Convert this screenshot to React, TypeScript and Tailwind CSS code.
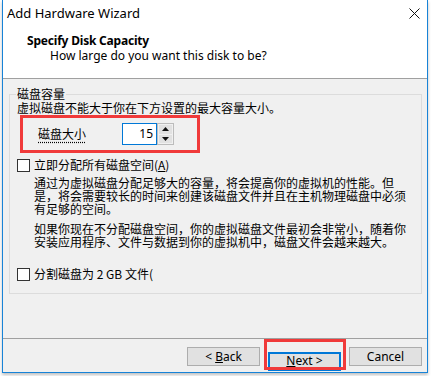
const CheckBox = () => (
    <span className="w-[13px] h-[13px] border border-[#333333] bg-white shrink-0" />
);

const WizardButton = ({ children, primary }: { children: React.ReactNode; primary?: boolean }) => (
    <button
        className={
            primary
                ? "w-[73px] h-[19px] bg-[#e1e1e1] border-2 border-[#0078d7] text-[12px] leading-none text-black"
                : "w-[73px] h-[19px] bg-[#e1e1e1] border border-[#adadad] text-[12px] leading-none text-black"
        }
    >
        {children}
    </button>
);

const App = () => {
    return (
        <div className="w-[432px] h-[376px] bg-white overflow-hidden font-['Noto_Sans','Noto_Sans_CJK_SC',sans-serif] text-black">
            <div className="ml-[2px] w-[426px] h-[373px] border-x border-b border-[#1883d7] bg-[#f0f0f0] flex flex-col shadow-[0_2px_3px_rgba(0,0,0,0.25)]">
                {/* title bar + header */}
                <div className="bg-white h-[79px] border-b border-[#a0a0a0] shrink-0">
                    <div className="h-[27px] flex items-center justify-between pl-[4px] pr-[7px]">
                        <span className="text-[13px]">Add Hardware Wizard</span>
                        <svg width="11" height="11" viewBox="0 0 11 11">
                            <path d="M0.5 0.5 L10.5 10.5 M10.5 0.5 L0.5 10.5" stroke="#111" strokeWidth="1" />
                        </svg>
                    </div>
                    <div className="pl-[24px] pt-[6px] text-[12px] font-bold leading-[16px] tracking-[-0.2px]">Specify Disk Capacity</div>
                    <div className="pl-[47px] text-[12px] leading-[14px]">How large do you want this disk to be?</div>
                </div>

                {/* body */}
                <div className="relative ml-[6px] mr-[5px] mt-[15px] h-[200px] border border-[#dcdcdc] pl-[7px] pt-[6px] font-['Noto_Sans_CJK_SC',sans-serif] text-[12px]">
                    <span className="absolute left-[6px] -top-[9px] px-[1px] bg-[#f0f0f0] leading-[16px]">磁盘容量</span>
                    <div className="leading-[14px] whitespace-nowrap">虚拟磁盘不能大于你在下方设置的最大容量大小。</div>

                    <div className="ml-[3px] w-[180px] h-[38px] border-[3px] border-[#f03a3a] flex items-center pl-[15px]">
                        <span className="w-[84px] underline decoration-dotted underline-offset-[3px]">磁盘大小</span>
                        <div className="w-[35px] h-[22px] border border-[#0078d7] bg-white flex items-center justify-end pr-[3px] font-['Noto_Sans',sans-serif]">
                            15
                        </div>
                        <div className="w-[17px] h-[22px] border border-[#bcbcbc] bg-[#f0f0f0] flex flex-col gap-px p-px">
                            <div className="flex-1 bg-[#e1e1e1] flex items-center justify-center">
                                <svg width="7" height="4" viewBox="0 0 7 4"><path d="M3.5 0 L7 4 L0 4 Z" fill="#111" /></svg>
                            </div>
                            <div className="flex-1 bg-[#e1e1e1] flex items-center justify-center">
                                <svg width="7" height="4" viewBox="0 0 7 4"><path d="M0 0 L7 0 L3.5 4 Z" fill="#111" /></svg>
                            </div>
                        </div>
                    </div>

                    <div className="mt-[4px] h-[16px] flex items-center gap-[4px]">
                        <CheckBox />
                        <span>立即分配所有磁盘空间(<u>A</u>)</span>
                    </div>

                    <div className="ml-[17px] mt-[3px] leading-[13px] whitespace-nowrap">
                        <div>通过为虚拟磁盘分配足够大的容量，将会提高你的虚拟机的性能。但</div>
                        <div>是，将会需要较长的时间来创建该磁盘文件并且在主机物理磁盘中必须</div>
                        <div>有足够的空间。</div>
                    </div>

                    <div className="ml-[17px] mt-[7px] leading-[13px] whitespace-nowrap">
                        <div>如果你现在不分配磁盘空间，你的虚拟磁盘文件最初会非常小，随着你</div>
                        <div>安装应用程序、文件与数据到你的虚拟机中，磁盘文件会越来越大。</div>
                    </div>

                    <div className="mt-[18px] h-[16px] flex items-center gap-[4px]">
                        <CheckBox />
                        <span className="whitespace-nowrap">分割磁盘为 2 GB 文件(</span>
                    </div>
                </div>

                <div className="mt-[44px] h-px bg-[#a0a0a0] shrink-0" />

                <div className="mt-[8px] flex justify-end gap-[8px] pr-[5px]">
                    <WizardButton>
                        &lt; <u>B</u>ack
                    </WizardButton>
                    <div className="relative">
                        <WizardButton primary>
                            <u>N</u>ext &gt;
                        </WizardButton>
                        <div className="absolute -left-[4px] -top-[8px] w-[82px] h-[31px] border-[3px] border-[#f03a3a]" />
                    </div>
                    <WizardButton>Cancel</WizardButton>
                </div>
            </div>
        </div>
    );
};

export default App;
